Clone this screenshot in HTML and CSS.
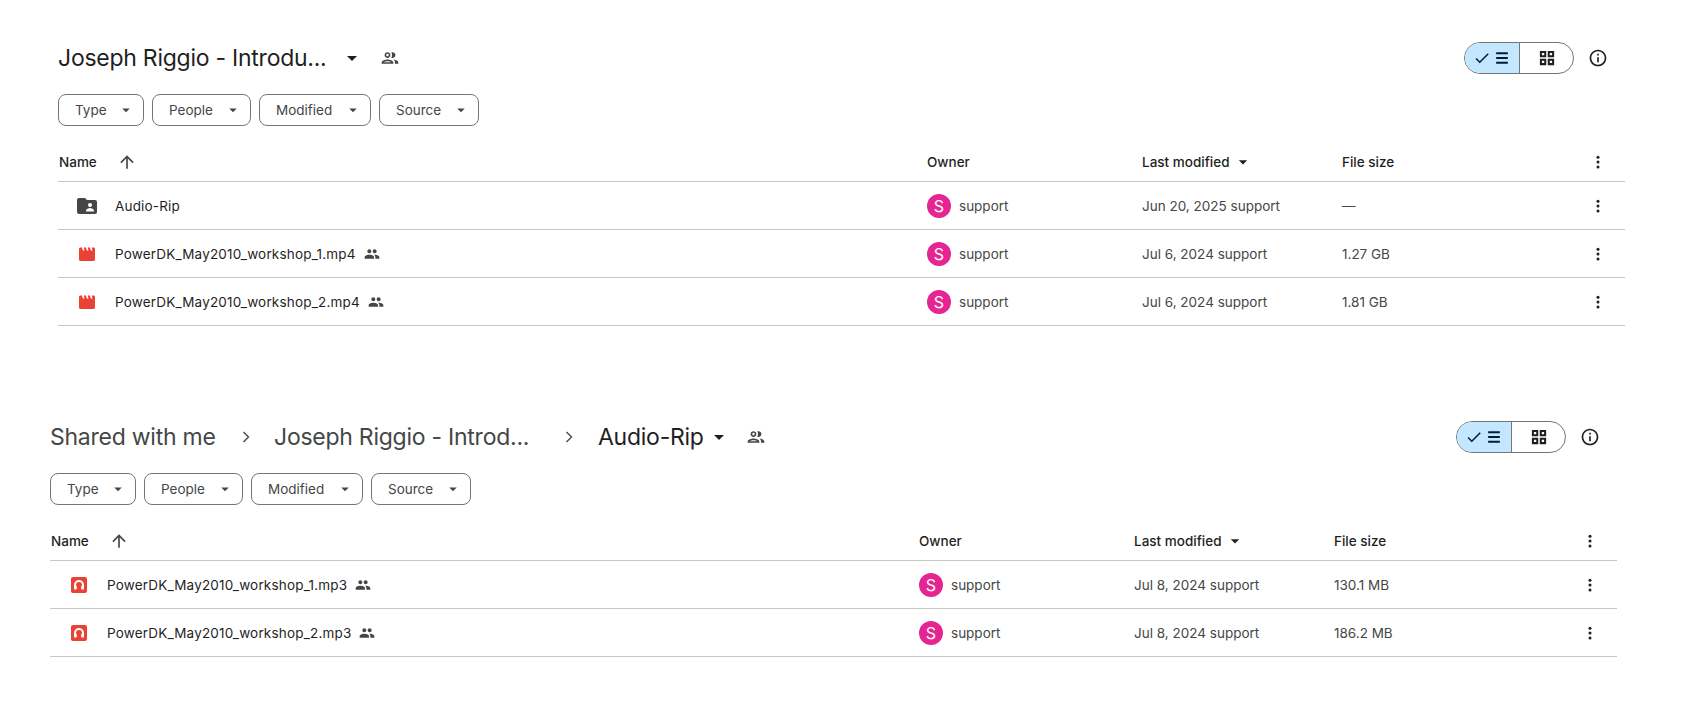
FILE: index.html
```html
<!DOCTYPE html>
<html lang="en">
<head>
<meta charset="utf-8">
<title>Drive folders</title>
<link rel="stylesheet" href="styles.css">
</head>
<body>
<svg class="defs" width="0" height="0" aria-hidden="true">
  <symbol id="caret" viewBox="0 0 24 24"><path d="M7 10l5 5 5-5z"/></symbol>
  <symbol id="up" viewBox="0 0 24 24"><path d="M4 12l1.41 1.41L11 7.83V20h2V7.83l5.58 5.59L20 12l-8-8-8 8z"/></symbol>
  <symbol id="people-o" viewBox="0 0 24 24"><path d="M9 13.75c-2.34 0-7 1.17-7 3.5V19h14v-1.75c0-2.33-4.66-3.5-7-3.5zM4.34 17c.84-.58 2.87-1.25 4.66-1.25s3.82.67 4.66 1.25H4.34zM9 12c1.93 0 3.5-1.57 3.5-3.5S10.93 5 9 5 5.5 6.57 5.5 8.5 7.07 12 9 12zm0-5c.83 0 1.5.67 1.5 1.5S9.83 10 9 10s-1.5-.67-1.5-1.5S8.17 7 9 7zm7.04 6.81c1.16.84 1.96 1.96 1.96 3.44V19h4v-1.75c0-2.02-3.5-3.17-5.96-3.44zM15 12c1.93 0 3.5-1.57 3.5-3.5S16.93 5 15 5c-.54 0-1.04.13-1.5.35.63.89 1 1.98 1 3.15s-.37 2.26-1 3.15c.46.22.96.35 1.5.35z"/></symbol>
  <symbol id="people" viewBox="0 0 24 24"><path d="M16 11c1.66 0 2.99-1.34 2.99-3S17.66 5 16 5c-1.66 0-3 1.34-3 3s1.34 3 3 3zm-8 0c1.66 0 2.99-1.34 2.99-3S9.66 5 8 5C6.34 5 5 6.34 5 8s1.34 3 3 3zm0 2c-2.33 0-7 1.17-7 3.5V19h14v-2.5c0-2.33-4.67-3.5-7-3.5zm8 0c-.29 0-.62.02-.97.05 1.16.84 1.97 1.97 1.97 3.45V19h6v-2.5c0-2.33-4.67-3.5-7-3.5z"/></symbol>
  <symbol id="check" viewBox="0 0 24 24"><path d="M9 16.17L4.83 12l-1.42 1.41L9 19 21 7l-1.41-1.41z"/></symbol>
  <symbol id="menu" viewBox="0 0 24 24"><path d="M5 19h14v-2.500H5zm0-5.750h14v-2.500H5zM5 5v2.500h14V5z"/></symbol>
  <symbol id="grid" viewBox="0 0 24 24"><path fill-rule="evenodd" d="M2.500 2.500h8.500V11H2.500zm2.700 2.700v3.100h3.100V5.200zM13 2.500h8.500V11H13zm2.700 2.700v3.100h3.100V5.200zM2.500 13H11v8.500H2.500zm2.700 2.700v3.100h3.100v-3.100zM13 13h8.500v8.500H13zm2.700 2.700v3.100h3.100v-3.100z"/></symbol>
  <symbol id="info" viewBox="0 0 24 24"><path d="M11 7h2v2h-2zm0 4h2v6h-2zm1-9C6.48 2 2 6.48 2 12s4.48 10 10 10 10-4.48 10-10S17.52 2 12 2zm0 18c-4.41 0-8-3.59-8-8s3.59-8 8-8 8 3.59 8 8-3.59 8-8 8z"/></symbol>
  <symbol id="kebab" viewBox="0 0 24 24"><circle cx="12" cy="5.500" r="2"/><circle cx="12" cy="12" r="2"/><circle cx="12" cy="18.500" r="2"/></symbol>
  <symbol id="chevron" viewBox="0 0 24 24"><path d="M9 6l6 6-6 6" fill="none" stroke="currentColor" stroke-width="1.600"/></symbol>
  <symbol id="folder" viewBox="0 0 20 20"><path fill="#444746" d="M2 2h6l2 2h8c1.100 0 2 .9 2 2v10c0 1.100-.9 2-2 2H2c-1.100 0-2-.9-2-2V4c0-1.100.9-2 2-2z"/><circle fill="#fff" cx="13" cy="9" r="2"/><path fill="#fff" d="M9 14.600c0-1.700 2.700-2.600 4-2.600s4 .9 4 2.600V15.500H9z"/></symbol>
  <symbol id="video" viewBox="0 0 16 16"><path fill="#ea4335" d="M1.500 1.500H3l.8 3H5.500l-.8-3H7l.8 3h1.700l-.8-3H11l.8 3h1.700l-.8-3h1.800c.3 0 1.500.5 1.500 1.300v10.700c0 .8-.7 1.500-1.500 1.500h-13C.7 15 0 14.300 0 13.500V3c0-.8.7-1.500 1.500-1.500z"/></symbol>
  <symbol id="audio" viewBox="0 0 16 16"><rect fill="#ea4335" width="16" height="16" rx="2"/><path fill="none" stroke="#fff" stroke-width="2" d="M4 11V8a4 4 0 0 1 8 0v3"/><rect fill="#fff" x="3" y="8.800" width="2.800" height="3.700" rx=".8"/><rect fill="#fff" x="10.200" y="8.800" width="2.800" height="3.700" rx=".8"/></symbol>
</svg>

<main class="page">
  <section class="drive first">
    <header class="top">
      <div class="crumbs">
        <h1 class="title title-long">Joseph Riggio - Introdu...</h1>
        <svg class="ic24 caret-a"><use href="#caret"/></svg>
        <svg class="ic20 share-a"><use href="#people-o"/></svg>
      </div>
      <div class="view">
        <div class="toggle">
          <span class="seg seg-on"><svg class="ic18"><use href="#check"/></svg><svg class="ic20"><use href="#menu"/></svg></span>
          <span class="seg seg-off"><svg class="ic18"><use href="#grid"/></svg></span>
        </div>
        <svg class="ic20 info"><use href="#info"/></svg>
      </div>
    </header>
    <div class="chips">
      <button class="chip chip-type">Type<svg class="ic18"><use href="#caret"/></svg></button>
      <button class="chip chip-people">People<svg class="ic18"><use href="#caret"/></svg></button>
      <button class="chip chip-modified">Modified<svg class="ic18"><use href="#caret"/></svg></button>
      <button class="chip chip-source">Source<svg class="ic18"><use href="#caret"/></svg></button>
    </div>
    <div class="row head">
      <div class="c-name head-name">Name<svg class="ic20 up"><use href="#up"/></svg></div>
      <div>Owner</div>
      <div class="sorted">Last modified<svg class="ic20"><use href="#caret"/></svg></div>
      <div>File size</div>
      <svg class="ic18 kebab"><use href="#kebab"/></svg>
    </div>
    <div class="row">
      <div class="c-name"><span class="file-ic"><svg class="ic20"><use href="#folder"/></svg></span><span class="fname">Audio-Rip</span></div>
      <div class="owner"><span class="avatar">S</span>support</div>
      <div>Jun 20, 2025 support</div>
      <div>—</div>
      <svg class="ic18 kebab"><use href="#kebab"/></svg>
    </div>
    <div class="row">
      <div class="c-name"><span class="file-ic"><svg class="ic16"><use href="#video"/></svg></span><span class="fname">PowerDK_May2010_workshop_1.mp4</span><svg class="ic16 shared"><use href="#people"/></svg></div>
      <div class="owner"><span class="avatar">S</span>support</div>
      <div>Jul 6, 2024 support</div>
      <div>1.27 GB</div>
      <svg class="ic18 kebab"><use href="#kebab"/></svg>
    </div>
    <div class="row">
      <div class="c-name"><span class="file-ic"><svg class="ic16"><use href="#video"/></svg></span><span class="fname">PowerDK_May2010_workshop_2.mp4</span><svg class="ic16 shared"><use href="#people"/></svg></div>
      <div class="owner"><span class="avatar">S</span>support</div>
      <div>Jul 6, 2024 support</div>
      <div>1.81 GB</div>
      <svg class="ic18 kebab"><use href="#kebab"/></svg>
    </div>
  </section>

  <section class="drive second">
    <header class="top">
      <div class="crumbs">
        <span class="title muted w-shared">Shared with me</span>
        <svg class="ic20 chev"><use href="#chevron"/></svg>
        <span class="title muted w-joseph">Joseph Riggio - Introd...</span>
        <svg class="ic20 chev"><use href="#chevron"/></svg>
        <h1 class="title w-audio">Audio-Rip</h1>
        <svg class="ic24 caret-b"><use href="#caret"/></svg>
        <svg class="ic20 share-b"><use href="#people-o"/></svg>
      </div>
      <div class="view">
        <div class="toggle">
          <span class="seg seg-on"><svg class="ic18"><use href="#check"/></svg><svg class="ic20"><use href="#menu"/></svg></span>
          <span class="seg seg-off"><svg class="ic18"><use href="#grid"/></svg></span>
        </div>
        <svg class="ic20 info"><use href="#info"/></svg>
      </div>
    </header>
    <div class="chips">
      <button class="chip chip-type">Type<svg class="ic18"><use href="#caret"/></svg></button>
      <button class="chip chip-people">People<svg class="ic18"><use href="#caret"/></svg></button>
      <button class="chip chip-modified">Modified<svg class="ic18"><use href="#caret"/></svg></button>
      <button class="chip chip-source">Source<svg class="ic18"><use href="#caret"/></svg></button>
    </div>
    <div class="row head">
      <div class="c-name head-name">Name<svg class="ic20 up"><use href="#up"/></svg></div>
      <div>Owner</div>
      <div class="sorted">Last modified<svg class="ic20"><use href="#caret"/></svg></div>
      <div>File size</div>
      <svg class="ic18 kebab"><use href="#kebab"/></svg>
    </div>
    <div class="row">
      <div class="c-name"><span class="file-ic"><svg class="ic16"><use href="#audio"/></svg></span><span class="fname">PowerDK_May2010_workshop_1.mp3</span><svg class="ic16 shared"><use href="#people"/></svg></div>
      <div class="owner"><span class="avatar">S</span>support</div>
      <div>Jul 8, 2024 support</div>
      <div>130.1 MB</div>
      <svg class="ic18 kebab"><use href="#kebab"/></svg>
    </div>
    <div class="row">
      <div class="c-name"><span class="file-ic"><svg class="ic16"><use href="#audio"/></svg></span><span class="fname">PowerDK_May2010_workshop_2.mp3</span><svg class="ic16 shared"><use href="#people"/></svg></div>
      <div class="owner"><span class="avatar">S</span>support</div>
      <div>Jul 8, 2024 support</div>
      <div>186.2 MB</div>
      <svg class="ic18 kebab"><use href="#kebab"/></svg>
    </div>
  </section>
</main>
</body>
</html>
```
FILE: styles.css
```css
* { box-sizing: border-box; }
html, body { margin: 0; height: 704px; overflow: hidden; background: #fff; }
body { font-family: Inter, Roboto, "Liberation Sans", sans-serif; font-size: 13.5px; color: #444746; }
.defs { position: absolute; }
svg { display: block; flex: none; fill: currentColor; }
.ic16 { width: 16px; height: 16px; }
.ic18 { width: 18px; height: 18px; }
.ic20 { width: 20px; height: 20px; }
.ic24 { width: 24px; height: 24px; }

.page { display: flex; flex-direction: column; padding-top: 38px; }
.drive { width: 1567px; }
.first { margin-left: 58px; }
.second { margin-left: 50px; margin-top: 91px; }

.top { display: flex; justify-content: space-between; align-items: center; height: 40px; }
.crumbs { display: flex; align-items: center; }
.title { margin: 0; font-size: 23px; font-weight: 400; letter-spacing: -.25px; color: #1f1f1f; white-space: nowrap; }
.muted { color: #444746; }
.title-long { width: 282px; }
.caret-a { color: #1f1f1f; }
.share-a { margin-left: 16px; color: #444746; }
.w-shared { width: 186px; }
.w-joseph { width: 285px; margin-left: 18px; }
.w-audio { width: 109px; margin-left: 19px; }
.chev { color: #444746; }
.caret-b { color: #1f1f1f; }
.share-b { margin-left: 15px; }

.view { display: flex; align-items: center; gap: 14px; padding-right: 17px; }
.toggle { display: flex; width: 110px; height: 32px; border: 1px solid #747775; border-radius: 16px; overflow: hidden; color: #001d35; }
.seg { display: flex; align-items: center; justify-content: center; }
.seg-on { width: 55px; background: #c2e7ff; border-right: 1px solid #747775; padding-left: 1px; gap: 1px; }
.seg-off { flex: 1; color: #1f1f1f; }
.info { color: #1f1f1f; }

.chips { display: flex; gap: 8px; margin-top: 16px; }
.chip { display: flex; align-items: center; justify-content: space-between; height: 32px; padding: 0 8px 0 16px; background: #fff; border: 1px solid #747775; border-radius: 8px; font: inherit; color: #444746; }
.chip-type { width: 86px; }
.chip-people { width: 99px; }
.chip-modified { width: 112px; }
.chip-source { width: 100px; }

.row { display: grid; grid-template-columns: 869px 215px 200px 1fr 40px; align-items: center; height: 48px; border-bottom: 1px solid #c7c7c7; padding-right: 7px; }
.head { color: #1f1f1f; font-weight: 500; margin-top: 16px; height: 40px; }
.kebab { justify-self: center; color: #1f1f1f; }
.c-name { display: flex; align-items: center; color: #1f1f1f; }
.head-name { padding-left: 1px; }
.up { margin-left: 20px; color: #444746; }
.sorted { display: flex; align-items: center; gap: 3px; }
.file-ic { display: flex; justify-content: center; width: 20px; margin-left: 19px; margin-right: 18px; }
.fname { letter-spacing: .18px; }
.shared { margin-left: 8px; color: #444746; }
.owner { display: flex; align-items: center; gap: 8px; }
.avatar { display: flex; align-items: center; justify-content: center; width: 24px; height: 24px; border-radius: 50%; background: #e52592; color: #fff; font-size: 16px; }
```
